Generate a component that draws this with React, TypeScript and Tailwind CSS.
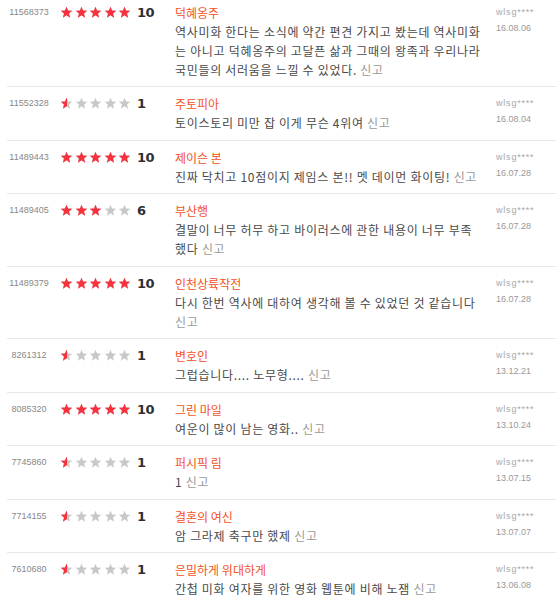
import React from "react";

interface Review {
  id: string;
  score: number;
  title: string;
  lines: string[];
  user: string;
  date: string;
}

const reviews: Review[] = [
  {
    id: "11568373",
    score: 10,
    title: "덕혜옹주",
    lines: [
      "역사미화 한다는 소식에 약간 편견 가지고 봤는데 역사미화",
      "는 아니고 덕혜옹주의 고달픈 삶과 그때의 왕족과 우리나라",
      "국민들의 서러움을 느낄 수 있었다.",
    ],
    user: "wlsg****",
    date: "16.08.06",
  },
  { id: "11552328", score: 1, title: "주토피아", lines: ["토이스토리 미만 잡 이게 무슨 4위여"], user: "wlsg****", date: "16.08.04" },
  { id: "11489443", score: 10, title: "제이슨 본", lines: ["진짜 닥치고 10점이지 제임스 본!! 멧 데이먼 화이팅!"], user: "wlsg****", date: "16.07.28" },
  {
    id: "11489405",
    score: 6,
    title: "부산행",
    lines: ["결말이 너무 허무 하고 바이러스에 관한 내용이 너무 부족", "했다"],
    user: "wlsg****",
    date: "16.07.28",
  },
  {
    id: "11489379",
    score: 10,
    title: "인천상륙작전",
    lines: ["다시 한번 역사에 대하여 생각해 볼 수 있었던 것 같습니다", ""],
    user: "wlsg****",
    date: "16.07.28",
  },
  { id: "8261312", score: 1, title: "변호인", lines: ["그럽습니다.... 노무형...."], user: "wlsg****", date: "13.12.21" },
  { id: "8085320", score: 10, title: "그린 마일", lines: ["여운이 많이 남는 영화.."], user: "wlsg****", date: "13.10.24" },
  { id: "7745860", score: 1, title: "퍼시픽 림", lines: ["1"], user: "wlsg****", date: "13.07.15" },
  { id: "7714155", score: 1, title: "결혼의 여신", lines: ["암 그라제 축구만 했제"], user: "wlsg****", date: "13.07.07" },
  { id: "7610680", score: 1, title: "은밀하게 위대하게", lines: ["간첩 미화 여자를 위한 영화 웹툰에 비해 노잼"], user: "wlsg****", date: "13.06.08" },
];

const STAR = "12,1.2 14.9,8.4 22.6,8.9 16.7,13.9 18.6,21.5 12,17.3 5.4,21.5 7.3,13.9 1.4,8.9 9.1,8.4";

function Star({ fill }: { fill: 0 | 0.5 | 1 }) {
  return (
    <span className="relative block h-[13px] w-[13px]">
      <svg viewBox="0 0 24 24" className="absolute inset-0 h-[13px] w-[13px]">
        <polygon points={STAR} fill="#c8c8c8" />
      </svg>
      {fill > 0 && (
        <span className={fill === 1 ? "absolute inset-y-0 left-0 w-[13px] overflow-hidden" : "absolute inset-y-0 left-0 w-[6.5px] overflow-hidden"}>
          <svg viewBox="0 0 24 24" className="h-[13px] w-[13px]">
            <polygon points={STAR} fill="#f6323f" />
          </svg>
        </span>
      )}
    </span>
  );
}

function Stars({ score }: { score: number }) {
  return (
    <div className="ml-[9px] flex h-[19px] w-[71px] items-center gap-[1.5px]">
      {[0, 1, 2, 3, 4].map((i) => {
        const v = score - i * 2;
        const fill = v >= 2 ? 1 : v === 1 ? 0.5 : 0;
        return <Star key={i} fill={fill} />;
      })}
    </div>
  );
}

function ReviewRow({ r }: { r: Review }) {
  const last = r.lines.length - 1;
  return (
    <div className="flex border-b border-[#e8e8e8] pt-[7px] pb-[7.5px]">
      <div className="w-[44px] text-center font-['Liberation_Sans',Arial,sans-serif] text-[9px] leading-[19px] text-[#888]">
        {r.id}
      </div>
      <Stars score={r.score} />
      <div className="ml-[6px] w-[38px] font-['DejaVu_Sans',Tahoma,sans-serif] text-[13px] font-bold leading-[19px] tracking-[-0.5px] text-[#2c2f36]">
        {r.score}
      </div>
      <div className="w-[315px] font-['Noto_Sans_CJK_KR','Noto_Sans',sans-serif] text-[12px] leading-[19px]">
        <div className="text-[#f4521e]">{r.title}</div>
        {r.lines.map((line, i) => (
          <div key={i} className="whitespace-nowrap tracking-[0.7px] text-[#4a4a4a]">
            {line}
            {i === last && (
              <span className="text-[#9a9a9a]">
                {line ? " " : ""}신고
              </span>
            )}
          </div>
        ))}
      </div>
      <div className="ml-[6px] font-['Liberation_Sans',Arial,sans-serif] text-[9px]">
        <div className="leading-[19px] tracking-[0.8px] text-[#a8a8a8]">{r.user}</div>
        <div className="leading-[12px] text-[#999]">{r.date}</div>
      </div>
    </div>
  );
}

export default function App() {
  return (
    <div className="h-[600px] w-[556px] overflow-hidden bg-white">
      <div className="-mt-[4.5px] ml-[7px]">
        {reviews.map((r) => (
          <ReviewRow key={r.id} r={r} />
        ))}
      </div>
    </div>
  );
}
